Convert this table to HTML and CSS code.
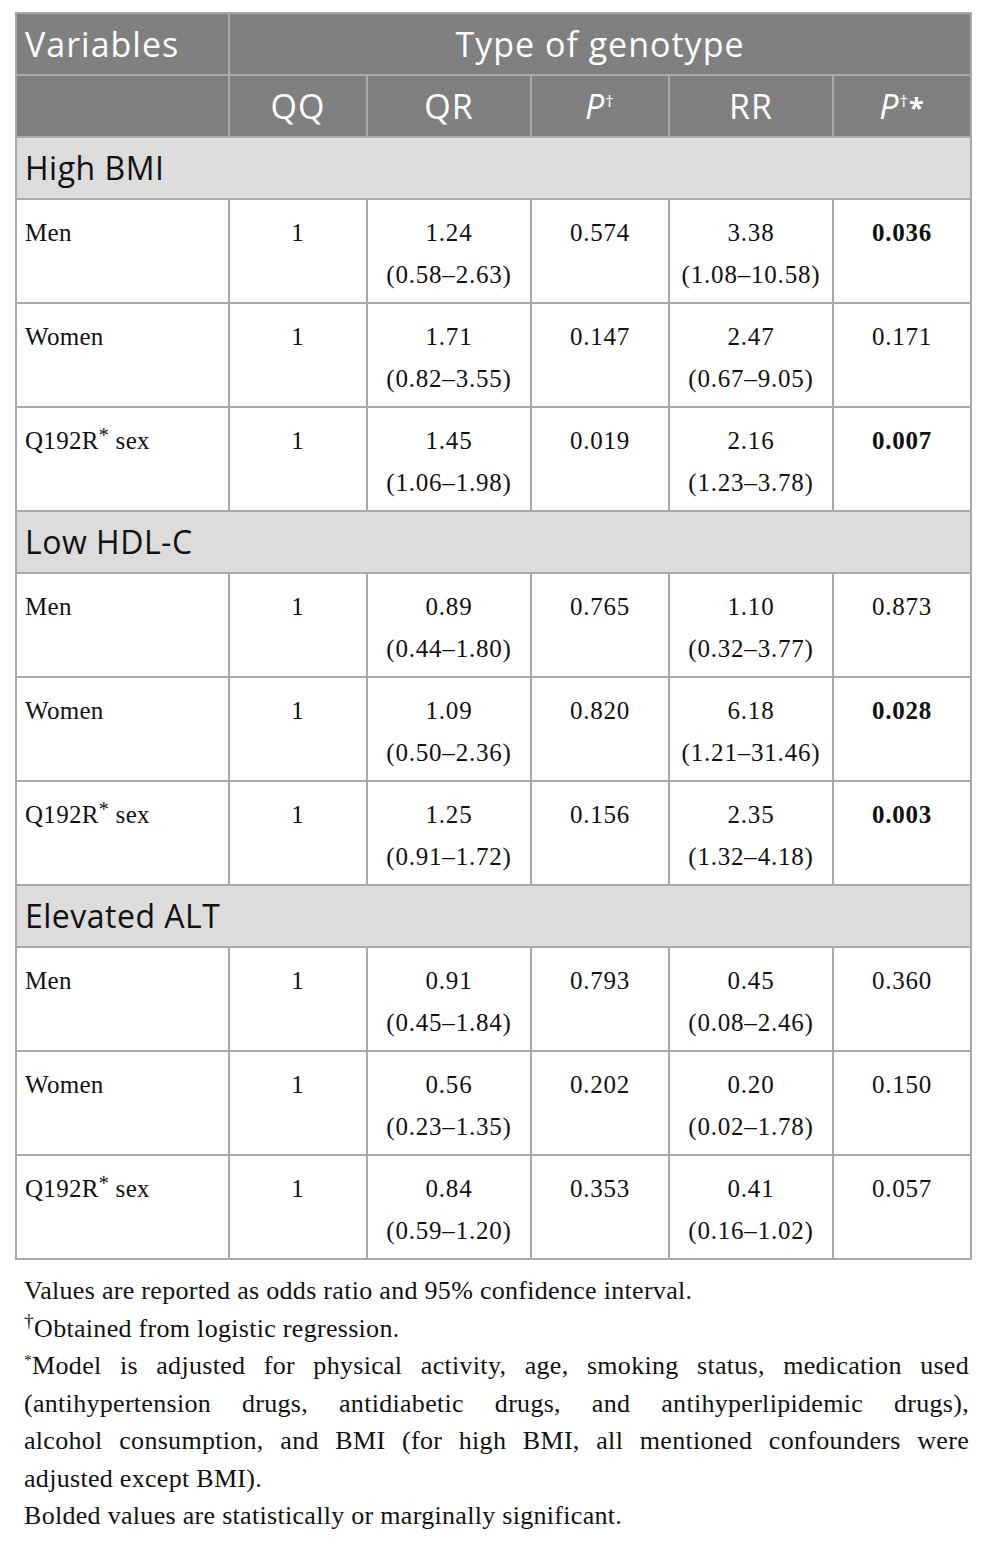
FILE: index.html
```html
<!DOCTYPE html>
<html lang="en">
<head>
    <meta charset="UTF-8">
    <meta name="viewport" content="width=device-width, initial-scale=1.0">
    <title>Odds ratios by PON1 Q192R genotype</title>
    <link rel="stylesheet" href="styles.css">
</head>
<body>
    <div class="page">
        <table class="results">
            <colgroup>
                <col class="col-var">
                <col class="col-qq">
                <col class="col-or">
                <col class="col-p">
                <col class="col-or">
                <col class="col-p">
            </colgroup>
            <thead>
                <tr>
                    <th class="left">Variables</th>
                    <th colspan="5">Type of genotype</th>
                </tr>
                <tr>
                    <th></th>
                    <th>QQ</th>
                    <th>QR</th>
                    <th><i>P</i><sup>†</sup></th>
                    <th>RR</th>
                    <th><i>P</i><sup>†</sup><b class="star">*</b></th>
                </tr>
            </thead>
            <tbody>
                <tr class="section"><td colspan="6">High BMI</td></tr>
                <tr>
                    <td class="left">Men</td>
                    <td>1</td>
                    <td>1.24<br>(0.58–2.63)</td>
                    <td>0.574</td>
                    <td>3.38<br>(1.08–10.58)</td>
                    <td><b>0.036</b></td>
                </tr>
                <tr>
                    <td class="left">Women</td>
                    <td>1</td>
                    <td>1.71<br>(0.82–3.55)</td>
                    <td>0.147</td>
                    <td>2.47<br>(0.67–9.05)</td>
                    <td>0.171</td>
                </tr>
                <tr>
                    <td class="left">Q192R<sup class="ast">*</sup> sex</td>
                    <td>1</td>
                    <td>1.45<br>(1.06–1.98)</td>
                    <td>0.019</td>
                    <td>2.16<br>(1.23–3.78)</td>
                    <td><b>0.007</b></td>
                </tr>

                <tr class="section"><td colspan="6">Low HDL-C</td></tr>
                <tr>
                    <td class="left">Men</td>
                    <td>1</td>
                    <td>0.89<br>(0.44–1.80)</td>
                    <td>0.765</td>
                    <td>1.10<br>(0.32–3.77)</td>
                    <td>0.873</td>
                </tr>
                <tr>
                    <td class="left">Women</td>
                    <td>1</td>
                    <td>1.09<br>(0.50–2.36)</td>
                    <td>0.820</td>
                    <td>6.18<br>(1.21–31.46)</td>
                    <td><b>0.028</b></td>
                </tr>
                <tr>
                    <td class="left">Q192R<sup class="ast">*</sup> sex</td>
                    <td>1</td>
                    <td>1.25<br>(0.91–1.72)</td>
                    <td>0.156</td>
                    <td>2.35<br>(1.32–4.18)</td>
                    <td><b>0.003</b></td>
                </tr>

                <tr class="section"><td colspan="6">Elevated ALT</td></tr>
                <tr>
                    <td class="left">Men</td>
                    <td>1</td>
                    <td>0.91<br>(0.45–1.84)</td>
                    <td>0.793</td>
                    <td>0.45<br>(0.08–2.46)</td>
                    <td>0.360</td>
                </tr>
                <tr>
                    <td class="left">Women</td>
                    <td>1</td>
                    <td>0.56<br>(0.23–1.35)</td>
                    <td>0.202</td>
                    <td>0.20<br>(0.02–1.78)</td>
                    <td>0.150</td>
                </tr>
                <tr>
                    <td class="left">Q192R<sup class="ast">*</sup> sex</td>
                    <td>1</td>
                    <td>0.84<br>(0.59–1.20)</td>
                    <td>0.353</td>
                    <td>0.41<br>(0.16–1.02)</td>
                    <td>0.057</td>
                </tr>
            </tbody>
        </table>

        <div class="notes">
            <p>Values are reported as odds ratio and 95% confidence interval.</p>
            <p><sup class="dag">†</sup>Obtained from logistic regression.</p>
            <p>
                <span class="line"><sup class="ast">*</sup>Model is adjusted for physical activity, age, smoking status, medication used</span>
                <span class="line">(antihypertension drugs, antidiabetic drugs, and antihyperlipidemic drugs),</span>
                <span class="line">alcohol consumption, and BMI (for high BMI, all mentioned confounders were</span>
                adjusted except BMI).
            </p>
            <p>Bolded values are statistically or marginally significant.</p>
        </div>
    </div>
</body>
</html>
```

FILE: styles.css
```css
body {
    margin: 0;
    background-color: #ffffff;
    color: #111111;
    font-family: 'Liberation Serif', 'Times New Roman', serif;
}
.page {
    width: 954px;
    padding: 12px 0 0 15px;
}
.results {
    width: 954px;
    table-layout: fixed;
    border-collapse: collapse;
    border: 2px solid #a9a9a9;
}
.col-var { width: 213px; }
.col-qq { width: 138px; }
.col-or { width: 164px; }
.col-p { width: 138px; }

.results th,
.results td {
    border: 2px solid #a9a9a9;
}
.results th {
    height: 60px;
    padding: 0 8px;
    background-color: #808080;
    color: #ffffff;
    font-family: 'Open Sans', 'Liberation Sans', sans-serif;
    font-size: 34px;
    font-weight: 400;
    line-height: 40px;
    letter-spacing: 1px;
    text-align: center;
    vertical-align: middle;
}
.results th.left {
    text-align: left;
}
.results th sup {
    font-size: 17px;
    vertical-align: 12px;
    line-height: 0;
}
.results th .star {
    font-size: 27px;
    font-weight: 700;
    vertical-align: 2px;
}
.results td {
    height: 84px;
    padding: 12px 8px 6px;
    font-size: 25px;
    line-height: 42px;
    letter-spacing: 0.8px;
    text-align: center;
    vertical-align: top;
}
.results td.left {
    text-align: left;
    letter-spacing: 0.3px;
}
.results td b {
    font-weight: 700;
}
.results .section td {
    height: 60px;
    padding: 0 8px;
    background-color: #dcdcdc;
    color: #111111;
    font-family: 'Open Sans', 'Liberation Sans', sans-serif;
    font-size: 32px;
    line-height: 40px;
    letter-spacing: 0.5px;
    text-align: left;
    vertical-align: middle;
}
.results .ast {
    font-size: 0.8em;
    vertical-align: 0.35em;
    line-height: 0;
}

.notes {
    width: 945px;
    padding-top: 12px;
    padding-left: 9px;
    font-size: 26px;
    line-height: 37.5px;
    letter-spacing: 0.3px;
}
.notes p {
    margin: 0;
}
.notes .line {
    display: block;
    text-align: justify;
    text-align-last: justify;
}
.notes .dag {
    font-size: 0.75em;
    vertical-align: 0.5em;
    line-height: 0;
}
.notes .ast {
    font-size: 0.6em;
    vertical-align: 0.55em;
    line-height: 0;
}
```
